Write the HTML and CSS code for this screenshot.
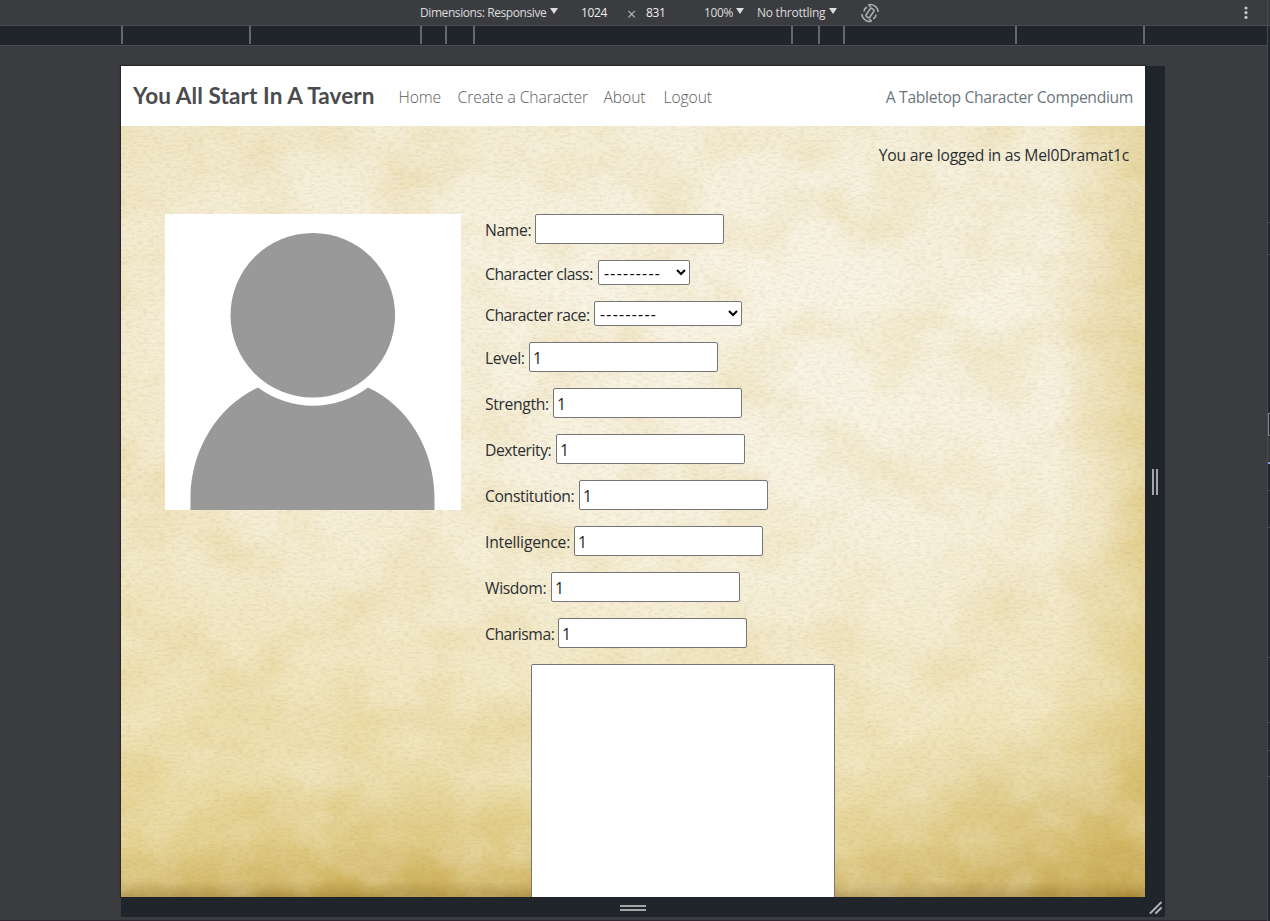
FILE: index.html
```html
<!DOCTYPE html>
<html lang="en">
<head>
<meta charset="utf-8">
<title>You All Start In A Tavern</title>
<link rel="stylesheet" href="styles.css">
</head>
<body>
<div class="device">
  <div class="toolbar">
    <span class="dims">Dimensions: Responsive</span><i class="caret"></i>
    <span class="size">1024</span><span class="times">×</span><span class="size">831</span>
    <span class="zoom">100%</span><i class="caret"></i>
    <span class="throttle">No throttling</span><i class="caret"></i>
    <svg class="rotate" width="20" height="20" viewBox="0 0 20 20" fill="none" stroke="#a9abae" stroke-width="1.600">
      <rect x="7.800" y="5.200" width="4.400" height="9.600" rx="1.200" transform="rotate(35 10 10)"/>
      <path d="M8.300 1.800C12.500 .5 17.800 3.800 18.200 9M11.700 18.200C7.500 19.500 2.200 16.200 1.800 11M4.300 8.500C4 6.800 5 5 7 4.200M15.700 11.500C16 13.200 15 15 13 15.800M8.500 1.800l2.300 2.300M11.500 18.200 9.200 15.900"/>
    </svg>
    <svg class="dots" width="4" height="14" viewBox="0 0 4 14" fill="#c4c6c8"><circle cx="2" cy="2" r="1.600"/><circle cx="2" cy="6.700" r="1.600"/><circle cx="2" cy="11.400" r="1.600"/></svg>
  </div>
  <svg class="ruler" width="1267" height="19" viewBox="0 0 1267 19" shape-rendering="crispEdges">
    <path fill="#66676a" d="M121 0h2v18h-2zM249 0h2v18h-2zM420 0h2v18h-2zM445 0h2v18h-2zM473 0h2v18h-2zM791 0h2v18h-2zM818 0h2v18h-2zM843 0h2v18h-2zM1015 0h2v18h-2zM1143 0h2v18h-2z"/>
  </svg>
  <div class="stage">
    <div class="page">
      <nav class="navbar">
        <span class="brand">You All Start In A Tavern</span>
        <span class="link home">Home</span>
        <span class="link create">Create a Character</span>
        <span class="link about">About</span>
        <span class="link">Logout</span>
        <span class="tagline">A Tabletop Character Compendium</span>
      </nav>
      <main class="parchment">
        <svg class="texture" width="1024" height="771">
          <filter id="blotch" x="0" y="0" width="100%" height="100%" color-interpolation-filters="sRGB">
            <feTurbulence type="fractalNoise" baseFrequency="0.012 0.016" numOctaves="7" seed="14"/>
            <feColorMatrix values="0 0 0 0 .84  0 0 0 0 .72  0 0 0 0 .36  1.5 0 0 0 -.62"/>
          </filter>
          <filter id="pale" x="0" y="0" width="100%" height="100%" color-interpolation-filters="sRGB">
            <feTurbulence type="fractalNoise" baseFrequency="0.018 0.024" numOctaves="6" seed="31"/>
            <feColorMatrix values="0 0 0 0 .97  0 0 0 0 .95  0 0 0 0 .87  1.6 0 0 0 -.6"/>
          </filter>
          <filter id="grain" x="0" y="0" width="100%" height="100%" color-interpolation-filters="sRGB">
            <feTurbulence type="fractalNoise" baseFrequency="0.18 0.42" numOctaves="3" seed="5"/>
            <feColorMatrix values="0 0 0 0 .62  0 0 0 0 .52  0 0 0 0 .26  .8 0 0 0 -.34"/>
          </filter>
          <rect width="1024" height="771" filter="url(#blotch)" opacity=".34"/>
          <rect width="1024" height="771" filter="url(#pale)" opacity=".45"/>
          <rect width="1024" height="771" filter="url(#grain)" opacity=".38"/>
        </svg>
        <p class="status">You are logged in as Mel0Dramat1c</p>
        <div class="content">
          <svg class="avatar" width="296" height="296" viewBox="0 0 296 296">
            <rect width="296" height="296" fill="#fff"/>
            <path d="M25.500 296V283C26 235 53 192 93 173.500A92 92 0 0 0 203 173.500C243 192 269 235 269.500 283V296Z" fill="#999"/>
            <circle cx="147.800" cy="101.300" r="82.300" fill="#999"/>
          </svg>
          <form class="form">
            <div class="row"><label class="w-name">Name:</label><input type="text"></div>
            <div class="row"><label class="w-class">Character class:</label><select class="s-class"><option>---------</option></select></div>
            <div class="row"><label class="w-race">Character race:</label><select class="s-race"><option>---------</option></select></div>
            <div class="row"><label class="w-level">Level:</label><input type="text" value="1"></div>
            <div class="row"><label class="w-str">Strength:</label><input type="text" value="1"></div>
            <div class="row"><label class="w-dex">Dexterity:</label><input type="text" value="1"></div>
            <div class="row"><label class="w-con">Constitution:</label><input type="text" value="1"></div>
            <div class="row"><label class="w-int">Intelligence:</label><input type="text" value="1"></div>
            <div class="row"><label class="w-wis">Wisdom:</label><input type="text" value="1"></div>
            <div class="row"><label class="w-cha">Charisma:</label><input type="text" value="1"></div>
            <textarea></textarea>
          </form>
        </div>
      </main>
    </div>
    <div class="handle-right"><i></i><i></i></div>
    <div class="handle-bottom"><i></i><i></i></div>
    <div class="handle-corner"><svg width="14" height="14" viewBox="0 0 14 14" stroke="#b0b1b2" stroke-width="2" stroke-linecap="round"><path d="M2.500 12 13 1.500M8 12l5-5"/></svg></div>
  </div>
</div>
<div class="edge">
  <svg width="3" height="921" viewBox="0 0 3 921" shape-rendering="crispEdges">
    <path fill="#4a4b4f" d="M0 0h1v921H0z"/><path fill="#20252b" d="M1 0h2v921H1z"/>
    <path fill="#3b3c40" d="M1 0h2v26H1zM1 437h2v24H1z"/>
    <path fill="#4a4b4f" d="M1 25h2v1H1zM1 222h2v1H1zM1 254h2v1H1zM1 490h2v1H1zM1 527h2v1H1zM1 657h2v1H1zM1 722h2v1H1zM1 750h2v1H1zM1 776h2v1H1z"/>
    <path fill="#85868a" d="M1 413h2v1H1zM1 414h1v21H1zM1 435h2v1H1z"/><path fill="#7c9fe8" d="M1 462h2v2H1z"/>
  </svg>
</div>
</body>
</html>
```

FILE: styles.css
```css
* { box-sizing: border-box; }
body { margin: 0; width: 1270px; height: 921px; overflow: hidden; display: flex; background: #3b3c40; font: 15.7px/24px "Open Sans", "Noto Sans", sans-serif; letter-spacing: -.3px; color: #2b2e31; }
.device { width: 1267px; height: 921px; display: flex; flex-direction: column; border-bottom: 1px solid #30262f; }
.edge { width: 3px; }
.edge svg, .ruler { display: block; }
.toolbar { height: 26px; display: flex; align-items: center; padding: 0 19px 0 420px; border-bottom: 1px solid #4a4b4f; font-size: 12px; line-height: 16px; color: #dcdddf; white-space: nowrap; }
.toolbar span { flex: none; }
.dims { width: 130px; letter-spacing: -.42px; }
.caret { width: 8px; flex: none; border: 4px solid transparent; border-top: 6px solid #dcdddf; border-bottom: 0; margin-top: -3px; }
.size { width: 26px; margin-left: 23px; letter-spacing: -.35px; color: #ededed; }
.times { margin-left: 20px; width: 9px; font-size: 16px; padding-top: 2px; color: #b5b6b9; }
.times + .size { margin-left: 10px; }
.zoom { margin-left: 32px; width: 32px; letter-spacing: -.4px; }
.throttle { margin-left: 13px; width: 72px; letter-spacing: -.25px; }
.rotate { margin-left: 23px; }
.dots { margin-left: auto; }
.ruler { flex: none; background: #20252b; }
.stage { border-top: 1px solid #4a4b4f; padding: 20px 0 0 121px; display: grid; grid-template: 831px 20px / 1024px 20px; }
.page { width: 1024px; height: 831px; overflow: hidden; box-shadow: 0 0 1px 1px #28252d; }
.navbar { height: 60px; padding: 0 12px; display: flex; align-items: center; background: #fff; white-space: nowrap; }
.brand { width: 265.5px; font: 700 22.5px/30px Lato, sans-serif; color: #4b4b4f; letter-spacing: .11px; }
.link { color: #5c5c5c; font-weight: 300; letter-spacing: -.1px; margin-right: 16px; padding-top: 1px; }
.home { width: 43px; }
.create { width: 130px; }
.about { width: 44px; }
.tagline { margin-left: auto; color: #6c757d; letter-spacing: -.34px; padding-top: 1px; }
.parchment { height: 771px; position: relative; isolation: isolate; padding: 17px 16px 16px; background:
  linear-gradient(to top, rgba(128,94,15,.5), rgba(170,130,30,.2) 16px, transparent 55px),
  radial-gradient(ellipse 330px 190px at 100% 100%, rgba(180,140,35,.45), transparent),
  radial-gradient(ellipse 280px 130px at 26% 100%, rgba(190,150,35,.35), transparent),
  linear-gradient(to left, rgba(210,180,80,.45), transparent 90px),
  linear-gradient(to right, rgba(220,195,105,.12), transparent 130px),
  radial-gradient(ellipse 560px 460px at 62% 32%, rgba(249,245,232,.9), transparent),
  linear-gradient(#f3ebd0, #f7f1df 20%, #f5edd4 50%, #efe3b6 78%, #e4d18f); }
.texture { position: absolute; inset: 0; z-index: -1; }
.status { margin: 0 0 -1px; text-align: right; letter-spacing: -.25px; }
.content { display: flex; gap: 24px; padding: 48px 0 0 28px; }
.avatar { flex: none; display: block; }
.form { display: flex; flex-direction: column; gap: 16px; }
.row { display: flex; align-items: center; white-space: nowrap; }
label { flex: none; letter-spacing: -.35px; padding-top: 2px; line-height: 22px; }
input, select, textarea { margin: 0; background: #fff; border: 1px solid #767676; border-radius: 2px; font: inherit; color: #212529; outline: 0; }
input { width: 189px; height: 30px; padding: 2px 3px 0; }
select { height: 25px; padding: 0 0 0 1px; color: #000; letter-spacing: 1.3px; }
.s-class { width: 92px; }
.s-race { width: 148px; }
textarea { display: block; width: 304px; height: 290px; margin-left: 46px; resize: none; }
.w-name { width: 50px; }
.w-class { width: 113px; }
.w-race { width: 109px; }
.w-level { width: 44px; }
.w-str { width: 68px; }
.w-dex { width: 71px; }
.w-con { width: 94px; }
.w-int { width: 89px; letter-spacing: -.2px; }
.w-wis { width: 66px; }
.w-cha { width: 73px; }
.w-class, .w-race, .w-cha, .w-dex { letter-spacing: -.45px; }
.handle-right, .handle-bottom, .handle-corner { background: #20252b; display: flex; align-items: center; justify-content: center; }
.handle-right { gap: 2px; }
.handle-right i { width: 2px; height: 26px; background: #a3a5a6; }
.handle-bottom { flex-direction: column; gap: 2px; padding-top: 2px; }
.handle-bottom i { width: 26px; height: 2px; background: #a3a5a6; }
.handle-corner { padding-top: 2px; }
```
